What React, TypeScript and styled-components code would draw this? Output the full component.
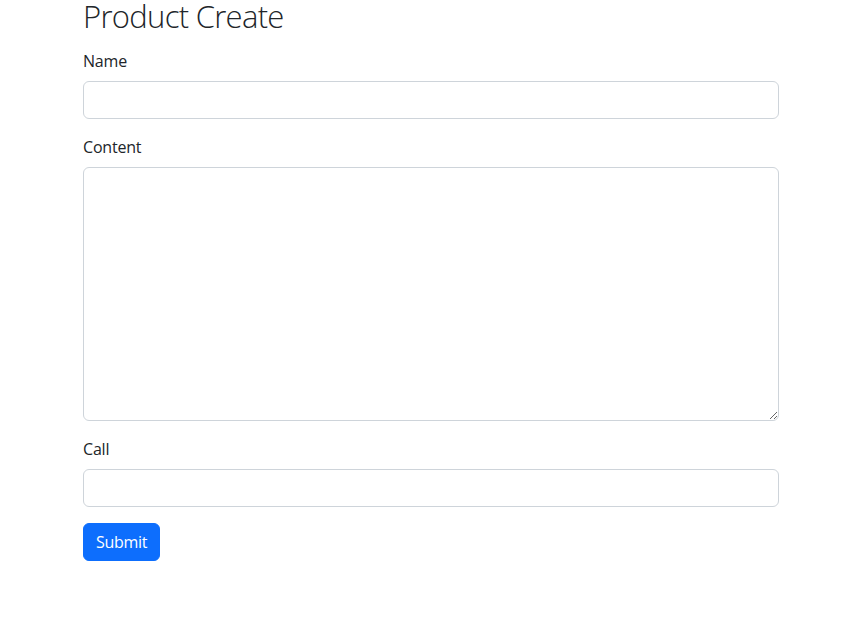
import styled, { createGlobalStyle } from "styled-components";

const GlobalStyle = createGlobalStyle`
	* {
		box-sizing: border-box;
	}
	body {
		margin: 0;
		background: #fff;
		color: #212529;
		font-family: "Open Sans", "Noto Sans", sans-serif;
		font-size: 16px;
		line-height: 1.5;
	}
`;

const Container = styled.div`
	width: 696px;
	margin-left: 83px;
	display: flex;
	flex-direction: column;
`;

const Title = styled.h2`
	margin: 0 0 17px;
	font-size: 31px;
	font-weight: 300;
	line-height: 32px;
	letter-spacing: -0.7px;
`;

const Form = styled.form`
	display: flex;
	flex-direction: column;
`;

const Field = styled.div`
	display: flex;
	flex-direction: column;
	margin-bottom: 16px;
`;

const Label = styled.label`
	margin-bottom: 8px;
	font-size: 16px;
	line-height: 24px;
	letter-spacing: -0.2px;
`;

const inputBase = `
	display: block;
	width: 100%;
	padding: 6px 12px;
	font-family: inherit;
	font-size: 16px;
	line-height: 24px;
	color: #212529;
	background: #fff;
	border: 1px solid #ced4da;
	border-radius: 6px;
	outline: none;
`;

const Input = styled.input`
	${inputBase}
	height: 38px;
`;

const TextArea = styled.textarea<{ $height: number }>`
	${inputBase}
	height: ${(p) => p.$height}px;
	resize: vertical;
`;

const Button = styled.button`
	align-self: flex-start;
	height: 38px;
	padding: 6px 12px;
	font-family: inherit;
	font-size: 16px;
	line-height: 24px;
	letter-spacing: -0.3px;
	color: #fff;
	background: #0d6efd;
	border: 1px solid #0d6efd;
	border-radius: 6px;
	cursor: pointer;
`;

const App = () => {
	return (
		<>
			<GlobalStyle />
			<Container>
				<Title>Product Create</Title>
				<Form onSubmit={(e) => e.preventDefault()}>
					<Field>
						<Label htmlFor="name">Name</Label>
						<Input id="name" name="name" type="text" />
					</Field>
					<Field>
						<Label htmlFor="content">Content</Label>
						<TextArea id="content" name="content" $height={254} />
					</Field>
					<Field>
						<Label htmlFor="call">Call</Label>
						<Input id="call" name="call" type="text" />
					</Field>
					<Button type="submit">Submit</Button>
				</Form>
			</Container>
		</>
	);
};

export default App;
